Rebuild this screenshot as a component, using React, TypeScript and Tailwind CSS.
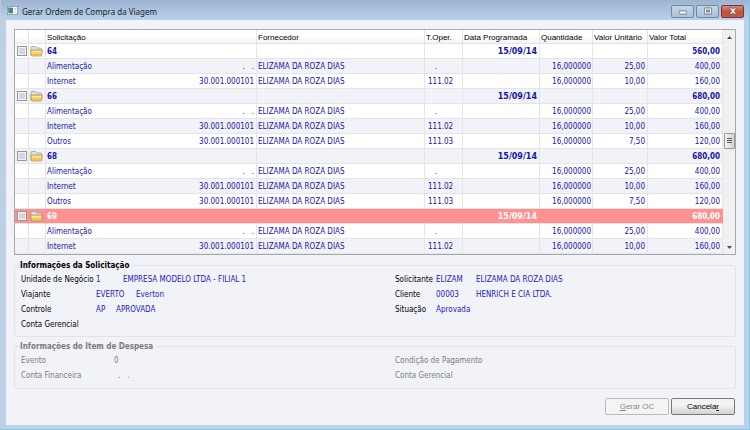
import { useState } from 'react';

type Row = {
  id: string;
  name: string;
  group?: boolean;
  code?: string;
  oper?: string;
  unit?: string;
  total: string;
};

const group = (name: string, total: string): Row => ({ id: name, name, group: true, total });

const item = (parent: string, name: string, code: string, oper: string, unit: string, total: string): Row => ({
  id: `${parent}-${name}`,
  name,
  code,
  oper,
  unit,
  total,
});

const food = (parent: string) => item(parent, 'Alimentação', '.\u00a0\u00a0\u00a0.', '\u00a0\u00a0\u00a0.', '25,00', '400,00');
const internet = (parent: string) => item(parent, 'Internet', '30.001.000101', '111.02', '10,00', '160,00');
const others = (parent: string) => item(parent, 'Outros', '30.001.000101', '111.03', '7,50', '120,00');

const rows: Row[] = [
  group('64', '560,00'),
  food('64'),
  internet('64'),
  group('66', '680,00'),
  food('66'),
  internet('66'),
  others('66'),
  group('68', '680,00'),
  food('68'),
  internet('68'),
  others('68'),
  group('69', '680,00'),
  food('69'),
  internet('69'),
];

const headers = ['Solicitação', 'Fornecedor', 'T.Oper.', 'Data Programada', 'Quantidade', 'Valor Unitário', 'Valor Total'];

function FolderIcon() {
  return (
    <svg viewBox="0 0 26 22" className="block h-[11px] w-[13px]">
      <path d="M2 19V3q0-2 2-2h7l3 3h7q2 0 2 2v12z" fill="#d5e3ea" stroke="#969ca0" strokeWidth="1.5" />
      <path d="M2 8h22q1 0 1 1l-2 10q0 1-1 1H4q-1 0-1-1L1 9q0-1 1-1z" fill="#f9d272" stroke="#b08c48" strokeWidth="1.5" />
      <path d="M4 11h18" stroke="#fdeab0" strokeWidth="2" />
      <path d="M5 17h16" stroke="#efbf4c" strokeWidth="3" />
    </svg>
  );
}

function AppIcon() {
  return (
    <svg viewBox="0 0 33 27" className="h-[9px] w-[11px]">
      <rect x="1" y="1" width="31" height="25" fill="#fff" stroke="#78828c" strokeWidth="2" />
      <rect x="4" y="5" width="14" height="17" fill="#3c8f78" />
      <rect x="4" y="5" width="7" height="9" fill="#5582bd" />
      <rect x="22" y="6" width="6" height="6" fill="#c9cdd1" />
      <rect x="22" y="15" width="6" height="6" fill="#dfe2e5" />
    </svg>
  );
}

function TitleBar() {
  const button = 'flex h-[13px] w-[23px] items-center justify-center rounded-[2px] border';
  return (
    <header className="flex h-5 items-center gap-1 bg-linear-to-b from-[#9db4d0] to-[#b9d2ec] pl-[6px] pr-[5px]">
      <AppIcon />
      <h1 className="flex-1 pt-[3px] font-['Noto_Sans',sans-serif] text-[8px] leading-[14px] text-[#141c26]">
        Gerar Ordem de Compra da Viagem
      </h1>
      <div className="flex gap-[2px] pt-[2px]">
        <button aria-label="Minimizar" className={`${button} border-[#71879f] bg-linear-to-b from-[#c5d6e9] to-[#a9c1da]`}>
          <svg viewBox="0 0 24 24" className="h-2 w-2">
            <rect x="1" y="12" width="22" height="9" rx="1" fill="#fff" stroke="#6b737d" strokeWidth="2.5" />
          </svg>
        </button>
        <button aria-label="Maximizar" className={`${button} border-[#71879f] bg-linear-to-b from-[#c5d6e9] to-[#a9c1da]`}>
          <svg viewBox="0 0 24 24" className="h-2 w-2">
            <rect x="1" y="3" width="22" height="18" rx="1" fill="#fff" stroke="#59616b" strokeWidth="2.5" />
            <rect x="8" y="9" width="8" height="6" fill="#a9c1da" stroke="#59616b" strokeWidth="2.5" />
          </svg>
        </button>
        <button aria-label="Fechar" className={`${button} border-[#6b3a3a] bg-linear-to-b from-[#d98c7c] via-[#c4503a] to-[#c65b45]`}>
          <svg viewBox="0 0 24 24" className="h-2 w-2">
            <path d="M1 3h7l4 4 4-4h7l-7 9 7 9h-7l-4-4-4 4H1l7-9z" fill="#fff" stroke="#5b4a55" strokeWidth="2" />
          </svg>
        </button>
      </div>
    </header>
  );
}

function OrderTable() {
  const [checked, setChecked] = useState<string[]>([]);
  const toggle = (id: string) =>
    setChecked((prev) => (prev.includes(id) ? prev.filter((x) => x !== id) : [...prev, id]));

  const base = 'overflow-hidden whitespace-nowrap border-b border-r border-[#e4e4e9] p-0';
  const cell = `${base} pt-[2px]`;

  return (
    <table className="w-full table-fixed border-separate border-spacing-0 text-[8px] leading-[12px] text-[#1515a8]">
      <colgroup>
        <col className="w-[14px]" />
        <col className="w-[17px]" />
        <col className="w-[211px]" />
        <col />
        <col className="w-[38px]" />
        <col className="w-[77px]" />
        <col className="w-[53px]" />
        <col className="w-[55px]" />
        <col className="w-[75px]" />
      </colgroup>
      <thead>
        <tr className="h-[14px] bg-linear-to-b from-white from-50% to-[#f1f1f2] font-['Liberation_Sans',Arial,sans-serif] text-black">
          <th className={cell} />
          <th className={cell} />
          {headers.map((h) => (
            <th key={h} className={`${cell} pl-[1px] text-left font-normal leading-[11px]`}>
              {h}
            </th>
          ))}
        </tr>
      </thead>
      <tbody>
        {rows.map((row) => {
          const selected = row.id === '69';
          const td = selected ? `${cell} border-r-transparent` : cell;
          const iconTd = selected ? `${base} border-r-transparent` : base;
          return (
            <tr
              key={row.id}
              className={`h-[15px] ${selected ? 'bg-[#ff9191] text-white' : 'odd:bg-white even:bg-[#f2f2f9]'} ${row.group ? 'font-bold' : ''}`}
            >
              <td className={iconTd}>
                {row.group && (
                  <input
                    type="checkbox"
                    aria-label={`Solicitação ${row.name}`}
                    checked={checked.includes(row.id)}
                    onChange={() => toggle(row.id)}
                    className="mx-auto block h-[10px] w-[10px] appearance-none border border-[#969797] bg-[#d3d6da] shadow-[inset_0_0_0_1px_#f4f4f4] checked:bg-[#4a6ea9]"
                  />
                )}
              </td>
              <td className={`${iconTd} pl-[1px]`}>{row.group && <FolderIcon />}</td>
              <td className={`${td} pl-[1px] pr-[2px]`}>
                <div className="flex justify-between">
                  <span>{row.name}</span>
                  <span>{row.code}</span>
                </div>
              </td>
              <td className={`${td} pl-[1px]`}>{!row.group && 'ELIZAMA DA ROZA DIAS'}</td>
              <td className={`${td} pl-[3px]`}>{row.oper}</td>
              <td className={`${td} pr-[2px] text-right font-['DejaVu_Sans',sans-serif]`}>{row.group && '15/09/14'}</td>
              <td className={`${td} pr-[1px] text-right`}>{!row.group && '16,000000'}</td>
              <td className={`${td} pr-[2px] text-right`}>{row.unit}</td>
              <td className={`${td} pr-[2px] text-right`}>{row.total}</td>
            </tr>
          );
        })}
      </tbody>
    </table>
  );
}

function ScrollBar() {
  return (
    <div className="flex w-3 shrink-0 flex-col items-center justify-between bg-[#f0f0f1] pb-[5px] pt-[6px]">
      <svg viewBox="0 0 10 6" className="h-[3px] w-[5px]">
        <path d="M0 6L5 0l5 6z" fill="#4c4c4c" />
      </svg>
      <div className="mb-1 flex h-4 w-[11px] flex-col items-center justify-center gap-[1px] rounded-[1px] border border-[#979797] bg-linear-to-r from-[#f5f5f5] to-[#d3d3d6]">
        <span className="h-px w-[5px] bg-[#5c5c5c]" />
        <span className="h-px w-[5px] bg-[#5c5c5c]" />
        <span className="h-px w-[5px] bg-[#5c5c5c]" />
      </div>
      <svg viewBox="0 0 10 6" className="h-[3px] w-[5px]">
        <path d="M0 0l5 6 5-6z" fill="#4c4c4c" />
      </svg>
    </div>
  );
}

export default function App() {
  return (
    <div className="flex min-h-screen flex-col border-x border-b border-l-[#c3ccd4] border-r-[#7fcbe6] border-b-[#7fcbe6] bg-[#b9d1ea] font-['DejaVu_Sans_Condensed','DejaVu_Sans',Tahoma,sans-serif] text-[8px] leading-[15px]">
      <TitleBar />
      <main className="mx-[5px] mb-1 flex flex-1 flex-col bg-[#f2f3f9] px-2 pt-[9px]">
        <div className="flex border border-[#a5a8ae] bg-white">
          <div className="min-w-0 flex-1">
            <OrderTable />
          </div>
          <ScrollBar />
        </div>

        <fieldset className="mt-[3px] rounded-[3px] border border-[#e1e3e9] px-[6px] pb-1">
          <legend className="-ml-[1px] pr-[3px] font-bold leading-[15px] text-black">Informações da Solicitação</legend>
          <div className="-mt-[1px] grid grid-cols-[374fr_334fr] text-[#1c1cb8]">
            <dl className="grid grid-cols-[75px_1fr]">
              <dt className="text-black">Unidade de Negócio</dt>
              <dd className="flex">
                <span className="w-[27px]">1</span>EMPRESA MODELO LTDA - FILIAL 1
              </dd>
              <dt className="text-black">Viajante</dt>
              <dd className="flex">
                <span className="w-10">EVERTO</span>Everton
              </dd>
              <dt className="text-black">Controle</dt>
              <dd className="flex">
                <span className="w-5">AP</span>APROVADA
              </dd>
              <dt className="text-black">Conta Gerencial</dt>
            </dl>
            <dl className="grid auto-rows-[15px] grid-cols-[41px_1fr]">
              <dt className="text-black">Solicitante</dt>
              <dd className="flex">
                <span className="w-10">ELIZAM</span>ELIZAMA DA ROZA DIAS
              </dd>
              <dt className="text-black">Cliente</dt>
              <dd className="flex">
                <span className="w-10">00003</span>HENRICH E CIA LTDA.
              </dd>
              <dt className="text-black">Situação</dt>
              <dd>Aprovada</dd>
            </dl>
          </div>
        </fieldset>

        <fieldset className="mt-[2px] rounded-[3px] border border-[#e1e3e9] px-[6px] pb-[5px] text-[#7a7a7e]">
          <legend className="-ml-[1px] pr-[3px] font-bold leading-[15px]">Informações do Item de Despesa</legend>
          <div className="-mt-[1px] grid grid-cols-[374fr_334fr]">
            <dl className="grid grid-cols-[93px_1fr]">
              <dt>Evento</dt>
              <dd>0</dd>
              <dt>Conta Financeira</dt>
              <dd className="pl-1">.&nbsp;&nbsp;&nbsp;.</dd>
            </dl>
            <dl>
              <dt>Condição de Pagamento</dt>
              <dt>Conta Gerencial</dt>
            </dl>
          </div>
        </fieldset>

        <div className="mt-[9px] flex justify-end gap-[2px] pb-[10px] pr-px font-['Liberation_Sans',Arial,sans-serif]">
          <button disabled className="h-[17px] w-16 rounded-[2px] border border-[#b9babd] bg-[#f4f4f5] leading-[15px] text-[#8a8a8c]">
            <u>G</u>erar OC
          </button>
          <button className="h-[17px] w-16 rounded-[2px] border border-[#77787a] bg-linear-to-b from-[#f3f3f3] from-40% to-[#d2d2d4] leading-[15px] text-black">
            Cancela<u>r</u>
          </button>
        </div>
      </main>
    </div>
  );
}
